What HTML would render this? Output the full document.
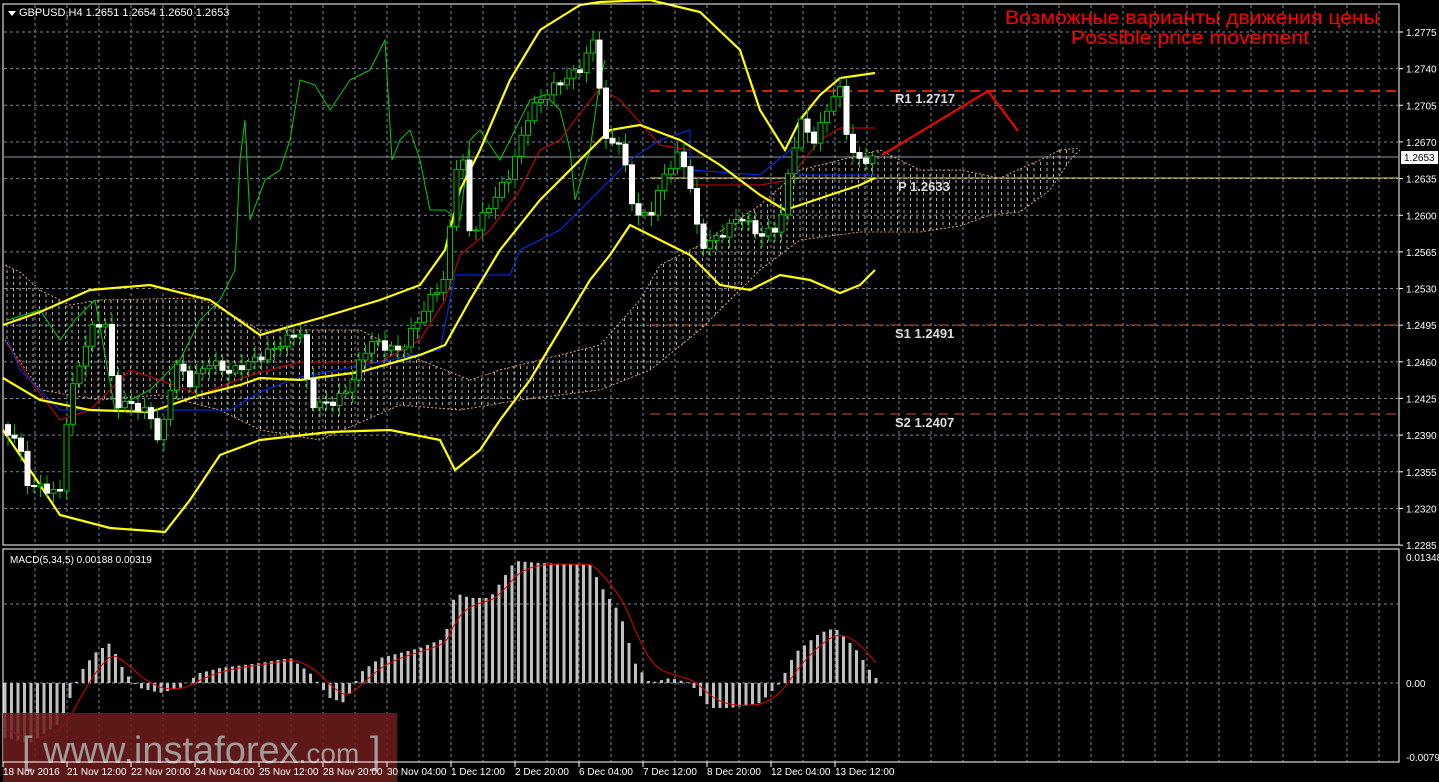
<!DOCTYPE html>
<html><head><meta charset="utf-8"><style>
html,body{margin:0;padding:0;background:#000;overflow:hidden}
svg{display:block}
text{font-family:"Liberation Sans",sans-serif}
</style></head><body>
<svg id="s" width="1439" height="782" xmlns="http://www.w3.org/2000/svg">
<rect width="1439" height="782" fill="#000"/>
<g id="grid"></g>
<g id="cloud"></g>
<g id="lines"></g>
<g id="candles"></g>
<g id="macd"></g>
<rect x="3" y="4" width="1396" height="541" fill="none" stroke="#fff" stroke-width="1"/>
<rect x="3" y="549" width="1396" height="213" fill="none" stroke="#fff" stroke-width="1"/>
<polygon points="8,11 16,11 12,16" fill="#fff"/>
<text x="19" y="16" fill="#fff" font-size="11">GBPUSD,H4  1.2651 1.2654 1.2650 1.2653</text>
<text x="10" y="563" fill="#fff" font-size="10">MACD(5,34,5) 0.00188 0.00319</text>
<text x="1192" y="24" fill="#f00" font-size="19.5" text-anchor="middle" textLength="374" lengthAdjust="spacingAndGlyphs">Возможные варианты движения цены</text>
<text x="1190" y="44" fill="#f00" font-size="19.5" text-anchor="middle" textLength="238" lengthAdjust="spacingAndGlyphs">Possible price movement</text>
<g font-family="Liberation Mono,monospace" font-size="13" fill="#ddd" font-weight="bold">
<text x="895" y="103">R1 1.2717</text>
<text x="898" y="191">P 1.2633</text>
<text x="895" y="338">S1 1.2491</text>
<text x="895" y="427">S2 1.2407</text>
</g>
<g id="axis" font-size="10" fill="#fff"></g>
<rect x="1401" y="151" width="37" height="13" fill="#fff"/>
<text x="1404" y="161" fill="#000" font-size="10">1.2653</text>
<rect x="3" y="713" width="394" height="69" fill="#6e1c1c" opacity="0.85"/>
<text x="22" y="763" fill="#a09a9a" font-size="38">[ www.insta<tspan>forex</tspan><tspan font-size="28">.com</tspan> ]</text>
<g id="axis2" font-size="10" fill="#fff"></g>
</svg>
<script>
const NS="http://www.w3.org/2000/svg";
function el(p,t,a){const e=document.createElementNS(NS,t);for(const k in a)e.setAttribute(k,a[k]);document.getElementById(p).appendChild(e);return e;}
const Y=p=>32+(1.2775-p)/0.0035*36.65;
for(let x=35;x<1398;x+=32){el("grid","line",{x1:x,y1:5,x2:x,y2:545,stroke:"#778899","stroke-dasharray":"3,3","stroke-width":1});el("grid","line",{x1:x,y1:550,x2:x,y2:762,stroke:"#778899","stroke-dasharray":"3,3"});}
const prices=[1.2775,1.2740,1.2705,1.2670,1.2635,1.2600,1.2565,1.2530,1.2495,1.2460,1.2425,1.2390,1.2355,1.2320,1.2285];
prices.forEach(p=>{const y=Y(p);if(y<542)el("grid","line",{x1:4,y1:y,x2:1398,y2:y,stroke:"#778899","stroke-dasharray":"3,3"});el("axis","line",{x1:1399,y1:y,x2:1403,y2:y,stroke:"#fff"});const t=el("axis","text",{x:1406,y:y+4});t.textContent=p.toFixed(4);});
[[557,"0.01348"],[683,"0.00"],[757,"-0.00794"]].forEach(([y,s])=>{const t=el("axis","text",{x:1406,y:y+4});t.textContent=s;});
el("grid","line",{x1:4,y1:604,x2:1398,y2:604,stroke:"#778899","stroke-dasharray":"3,3"});
el("grid","line",{x1:4,y1:683,x2:1398,y2:683,stroke:"#778899","stroke-dasharray":"3,3"});
const dates=["18 Nov 2016","21 Nov 12:00","22 Nov 20:00","24 Nov 04:00","25 Nov 12:00","28 Nov 20:00","30 Nov 04:00","1 Dec 12:00","2 Dec 20:00","6 Dec 04:00","7 Dec 12:00","8 Dec 20:00","12 Dec 04:00","13 Dec 12:00"];
dates.forEach((d,i)=>{const x=3+i*64;const t=el("axis2","text",{x:x,y:775});t.textContent=d;el("axis2","line",{x1:x,y1:762,x2:x,y2:767,stroke:"#fff"});});
el("axis2","line",{x1:3,y1:762,x2:1399,y2:762,stroke:"#fff"});
function interp(pts,x){for(let i=0;i<pts.length-1;i++){if(x>=pts[i][0]&&x<=pts[i+1][0]){const t=(x-pts[i][0])/(pts[i+1][0]-pts[i][0]);return pts[i][1]+t*(pts[i+1][1]-pts[i][1]);}}return pts[pts.length-1][1];}
function pl(g,pts,c,w,extra){const a={points:pts.map(p=>p.join(",")).join(" "),fill:"none",stroke:c,"stroke-width":w||1};Object.assign(a,extra||{});return el(g,"polyline",a);}
const cTop=[[5,265],[20,272],[40,290],[70,305],[100,300],[200,298],[260,330],[360,330],[420,360],[470,380],[500,370],[560,355],[600,345],[640,300],[660,265],[700,245],[760,205],[800,170],[840,160],[880,150],[920,170],[960,170],[1000,178],[1040,160],[1060,150],[1080,148]];
const cBot=[[5,340],[40,390],[100,400],[160,395],[220,410],[260,430],[320,440],[400,405],[460,410],[520,400],[600,390],[650,370],[700,330],[760,270],[800,240],[860,232],[920,232],[960,226],[990,215],[1020,212],[1050,190],[1070,160],[1080,150]];
const defs=el("s","defs",{});
const pat=document.createElementNS(NS,"pattern");pat.setAttribute("id","dp");pat.setAttribute("width","6.5");pat.setAttribute("height","6");pat.setAttribute("patternUnits","userSpaceOnUse");
const r=document.createElementNS(NS,"rect");r.setAttribute("x","0");r.setAttribute("y","0");r.setAttribute("width","1");r.setAttribute("height","3");r.setAttribute("fill","#b8b0a8");pat.appendChild(r);defs.appendChild(pat);
el("cloud","polygon",{points:cTop.concat(cBot.slice().reverse()).map(p=>p.join(",")).join(" "),fill:"url(#dp)"});
pl("cloud",cTop,"#d8a070",1,{"stroke-dasharray":"2,2"});pl("cloud",cBot,"#d8a070",1,{"stroke-dasharray":"2,2"});
el("lines","line",{x1:650,y1:91,x2:1398,y2:91,stroke:"#ff3000","stroke-width":1.5,"stroke-dasharray":"10,6"});
el("lines","line",{x1:4,y1:157,x2:1398,y2:157,stroke:"#9098a0"});
el("lines","line",{x1:650,y1:178,x2:1398,y2:178,stroke:"#e8d070"});
el("lines","line",{x1:650,y1:325,x2:1398,y2:325,stroke:"#c05030","stroke-dasharray":"10,6"});
el("lines","line",{x1:650,y1:414,x2:1398,y2:414,stroke:"#c05030","stroke-dasharray":"10,6"});
pl("lines",[[882,155],[988,91],[1018,131]],"#f00",2);
pl("lines",[[8,320],[40,310],[60,340],[75,320],[95,300],[115,410],[130,400],[150,390],[180,360],[200,320],[220,300],[235,270],[240,160],[245,120],[250,220],[265,180],[280,170],[290,140],[300,80],[315,85],[330,110],[350,80],[370,70],[385,40],[392,160],[400,140],[410,130],[420,160],[430,210],[445,210],[460,220],[470,140],[480,130],[500,160],[515,130],[530,100],[545,95],[560,110],[570,150],[575,200],[590,150],[600,80],[605,60]],"#00d000",1);
pl("lines",[[8,345],[30,380],[60,420],[90,410],[130,370],[160,380],[200,395],[250,375],[300,362],[380,362],[420,340],[445,300],[460,255],[490,230],[520,190],[540,150],[560,140],[575,120],[600,88],[620,100],[660,145],[690,150],[690,185],[760,185],[790,180],[800,165],[820,140],[840,128],[875,128]],"#e00000",1);
pl("lines",[[8,340],[20,370],[60,410],[120,410],[230,410],[260,392],[300,377],[380,362],[440,350],[455,275],[510,275],[520,250],[560,230],[600,190],[630,160],[660,140],[690,130],[690,170],[760,175],[790,150],[800,175],[840,175],[875,175]],"#0030ff",1);
const bu=[[3,325],[40,312],[90,290],[150,285],[210,300],[260,335],[320,318],[380,300],[420,285],[445,250],[460,190],[480,150],[510,80],[540,30],[580,5],[600,2],[650,0],[700,12],[740,50],[760,110],[785,150],[800,120],[820,95],[840,78],[875,73]];
const bm=[[3,378],[40,400],[90,410],[150,412],[200,395],[240,385],[260,378],[300,380],[360,372],[420,355],[445,345],[470,300],[500,250],[540,200],[580,160],[610,130],[640,125],[680,140],[720,165],[760,195],[785,210],[800,205],[830,195],[860,185],[875,178]];
const bl=[[3,430],[30,470],[60,515],[110,528],[165,532],[190,500],[220,455],[260,440],[330,432],[390,430],[440,440],[455,470],[480,450],[500,420],[530,380],[560,330],[590,280],[610,255],[630,225],[660,240],[690,255],[720,285],[750,290],[780,275],[810,280],[840,293],[860,285],[875,270]];
[bu,bm,bl].forEach(b=>pl("lines",b,"#ffff00",2.2));
const cp=[[8,1.2390],[18,1.2390],[25,1.2345],[40,1.2340],[60,1.2335],[68,1.2420],[90,1.2490],[105,1.2500],[115,1.2420],[130,1.2420],[150,1.2410],[160,1.2380],[175,1.2460],[190,1.2440],[210,1.2460],[230,1.2450],[250,1.2460],[270,1.2470],[300,1.2490],[310,1.2420],[330,1.2420],[345,1.2430],[370,1.2480],[400,1.2470],[430,1.2520],[445,1.2540],[460,1.2680],[470,1.2580],[490,1.2610],[510,1.2640],[530,1.2700],[550,1.2720],[580,1.2740],[595,1.2770],[605,1.2670],[620,1.2670],[635,1.2600],[650,1.2600],[665,1.2640],[680,1.2660],[690,1.2630],[700,1.2570],[720,1.2580],[740,1.2600],[760,1.2580],[780,1.2590],[790,1.2650],[800,1.2690],[815,1.2670],[830,1.2710],[840,1.2720],[850,1.2660],[860,1.2653],[875,1.2653]];
let prev=Y(1.2400);
for(let x=8,i=0;x<=876;x+=6.5,i++){
 const c=Y(interp(cp,x))+Math.sin(i*2.3)*4;
 const o=prev;prev=c;
 const top=Math.min(o,c),bot=Math.max(o,c);
 const hi=top-3-Math.abs(Math.sin(i*1.7))*8,lo=bot+3+Math.abs(Math.cos(i*1.3))*8;
 el("candles","line",{x1:x,y1:hi,x2:x,y2:lo,stroke:"#00c000"});
 el("candles","rect",{x:x-2.5,y:top,width:5,height:Math.max(1,bot-top),fill:c>o?"#fff":"#000",stroke:c>o?"#fff":"#00c000","stroke-width":1});
}
const mv=[[5,-55],[30,-60],[60,-40],[80,10],[95,30],[110,40],[125,10],[140,-5],[160,-10],[180,-5],[200,10],[220,15],[260,20],[290,25],[310,10],[330,-15],[345,-20],[360,10],[380,25],[420,35],[445,45],[455,90],[470,85],[490,85],[515,122],[540,120],[590,118],[605,90],[620,70],[635,20],[650,0],[670,5],[690,0],[710,-25],[730,-25],[760,-20],[780,0],[795,30],[820,50],[835,55],[855,35],[875,5]];
let sig=-40,sp=[];
for(let x=5;x<=876;x+=6.5){const v=interp(mv,x);el("macd","rect",{x:x-1.5,y:v>0?683-v:683,width:3,height:Math.abs(v)||1,fill:"#c0c0c0"});sig=sig+(v-sig)*0.33;sp.push([x,683-sig]);}
pl("macd",sp,"#e00000",1);
</script>
</body></html>
